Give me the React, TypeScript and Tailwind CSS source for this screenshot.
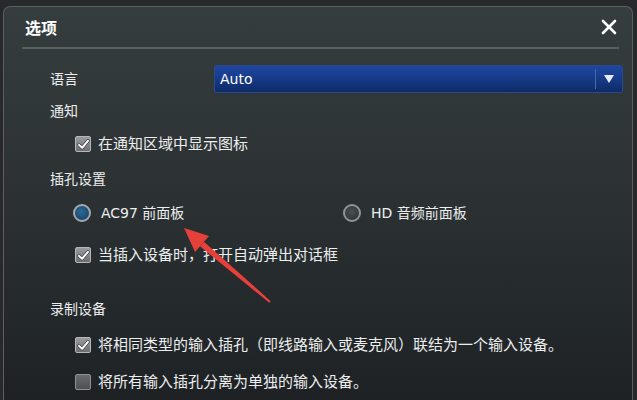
import { useState } from "react";

const FONT = { fontFamily: '"DejaVu Sans", "Noto Sans CJK SC", sans-serif' };

const CheckBox = ({ checked, label }: { checked: boolean; label: string }) => (
  <div className="flex items-center gap-[7px] pl-[25px]">
    <div
      className={
        "flex h-[16px] w-[16px] items-center justify-center rounded-[2px] border " +
        (checked
          ? "border-[#b5b8b9] bg-gradient-to-b from-[#9a9c9d] to-[#6c6e70]"
          : "border-[#8e9192] bg-gradient-to-b from-[#6a6c6d] to-[#4d4f50]")
      }
    >
      {checked && (
        <svg viewBox="0 0 16 16" className="h-[13px] w-[13px]">
          <path d="M2.5 8.5 L6.3 12 L13.5 3.5" fill="none" stroke="#3a3c3d" strokeWidth="4" strokeLinecap="round" strokeLinejoin="round" />
          <path d="M2.5 8.5 L6.3 12 L13.5 3.5" fill="none" stroke="#ffffff" strokeWidth="2.4" strokeLinecap="round" strokeLinejoin="round" />
        </svg>
      )}
    </div>
    <span className="text-[15px] text-[#eceeee]">{label}</span>
  </div>
);

const Radio = ({ selected, label }: { selected: boolean; label: string }) => (
  <div className="flex items-center gap-[10px]">
    <div
      className={
        "h-[18px] w-[18px] rounded-full border-[2px] " +
        (selected
          ? "border-[#a3aaad] bg-[radial-gradient(circle_at_45%_40%,#2d6b99,#123a5c)]"
          : "border-[#8f9597] bg-[radial-gradient(circle_at_45%_40%,#4a5052,#2a2e30)]")
      }
    />
    <span className="text-[14px] text-[#eceeee]">{label}</span>
  </div>
);

export default function App() {
  const [jack, setJack] = useState("ac97");

  return (
    <div className="relative h-[400px] w-[637px] overflow-hidden bg-[#27292b] pl-[3px] pr-[4px] pt-[6px]" style={FONT}>
      <div className="h-[400px] rounded-t-[7px] border-l border-r border-t border-[#5a5e60] bg-gradient-to-b from-[#363d3e] via-[#2b3133] to-[#1d2124]">
        {/* header */}
        <div className="flex h-[40px] items-center justify-between pl-[21px] pr-[15px]">
          <span className="text-[16px] font-bold text-white" style={{ fontFamily: '"Noto Sans CJK SC", sans-serif' }}>
            选项
          </span>
          <button className="flex h-[16px] w-[16px] items-center justify-center">
            <svg viewBox="0 0 16 16" className="h-[16px] w-[16px]">
              <path d="M2 2 L14 14 M14 2 L2 14" stroke="#ffffff" strokeWidth="2.6" strokeLinecap="round" />
            </svg>
          </button>
        </div>
        <div className="ml-[18px] h-[2px] w-[597px] bg-[#59615f]" />

        <div className="pl-[46px] pt-[16px]">
          {/* language */}
          <div className="flex h-[28px] items-center">
            <span className="w-[164px] text-[14px] text-[#eceeee]">语言</span>
            <div className="flex h-[28px] w-[409px] items-center rounded-[3px] border border-[#2a4a8c] bg-gradient-to-b from-[#1f47a0] via-[#163a88] to-[#0f2a66]">
              <span className="flex-1 pl-[5px] text-[14px] text-white">Auto</span>
              <div className="h-[20px] w-px bg-[#4a67a8]" />
              <div className="flex w-[26px] items-center justify-center">
                <svg viewBox="0 0 10 8" className="h-[8px] w-[10px]">
                  <path d="M0 0 L10 0 L5 8 Z" fill="#e8ecf4" />
                </svg>
              </div>
            </div>
          </div>

          <div className="flex h-[36px] items-center">
            <span className="text-[14px] text-[#eceeee]">通知</span>
          </div>
          <div className="flex h-[30px] items-center">
            <CheckBox checked label="在通知区域中显示图标" />
          </div>

          <div className="flex h-[40px] items-center">
            <span className="text-[14px] text-[#eceeee]">插孔设置</span>
          </div>
          <div className="flex h-[28px] items-center pl-[23px]">
            <div className="w-[270px] cursor-pointer" onClick={() => setJack("ac97")}>
              <Radio selected={jack === "ac97"} label="AC97 前面板" />
            </div>
            <div className="cursor-pointer" onClick={() => setJack("hd")}>
              <Radio selected={jack === "hd"} label="HD 音频前面板" />
            </div>
          </div>
          <div className="flex h-[56px] items-center">
            <CheckBox checked label="当插入设备时，打开自动弹出对话框" />
          </div>

          <div className="flex h-[52px] items-center">
            <span className="text-[14px] text-[#eceeee]">录制设备</span>
          </div>
          <div className="flex h-[20px] items-center">
            <CheckBox checked label="将相同类型的输入插孔（即线路输入或麦克风）联结为一个输入设备。" />
          </div>
          <div className="flex h-[54px] items-center">
            <CheckBox checked={false} label="将所有输入插孔分离为单独的输入设备。" />
          </div>
        </div>
      </div>

      {/* red annotation arrow */}
      <svg className="pointer-events-none absolute left-0 top-0" width="637" height="400">
        <polygon points="184,228 209,236 195,252" fill="#e6403a" />
        <polygon points="200,246.3 204,241.7 270.7,301.2 269.3,302.8" fill="#e6403a" />
      </svg>
    </div>
  );
}
